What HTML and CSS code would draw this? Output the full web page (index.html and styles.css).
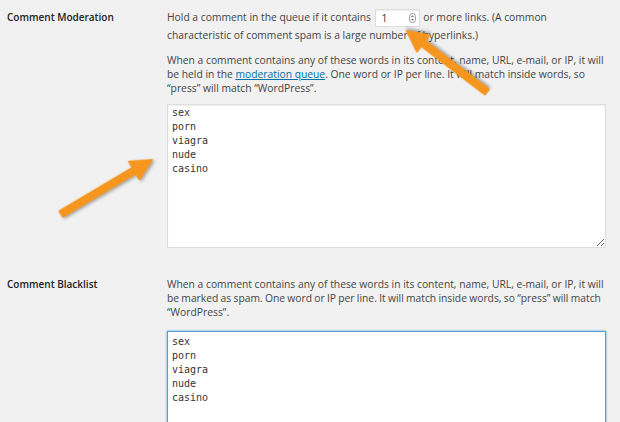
FILE: index.html
```html
<!DOCTYPE html>
<html lang="en">
<head>
  <meta charset="UTF-8">
  <title>Discussion Settings</title>
  <link rel="stylesheet" href="styles.css">
</head>
<body>

  <div class="settings">
    <div class="row row-moderation">
      <div class="row-label">Comment Moderation</div>
      <div class="row-field">
        <p class="links-line">Hold a comment in the queue if it contains <span class="num-box"><span>1</span><svg class="spinner" width="7" height="10" viewBox="0 0 7 10"><rect x="0.5" y="0.5" width="6" height="9" rx="3" fill="#fff" stroke="#999"/><path d="M3.5 2.2 L5 4 L2 4 Z M3.5 7.8 L5 6 L2 6 Z" fill="#666"/></svg></span> or more links. (A common<br>characteristic of comment spam is a large number of hyperlinks.)</p>
        <p>When a comment contains any of these words in its content, name, URL, e-mail, or IP, it will be held in the <a href="#">moderation queue</a>. One word or IP per line. It will match inside words, so &ldquo;press&rdquo; will match &ldquo;WordPress&rdquo;.</p>
        <textarea class="word-list" spellcheck="false">sex
porn
viagra
nude
casino</textarea>
      </div>
    </div>

    <div class="row row-blacklist">
      <div class="row-label">Comment Blacklist</div>
      <div class="row-field">
        <p>When a comment contains any of these words in its content, name, URL, e-mail, or IP, it will<br><span class="tight">be marked as spam. One word or IP per line. It will match inside words, so &ldquo;press&rdquo; will match</span><br>&ldquo;WordPress&rdquo;.</p>
        <textarea class="word-list focused" spellcheck="false">sex
porn
viagra
nude
casino</textarea>
      </div>
    </div>
  </div>

  <!-- callout arrows drawn over the screenshot -->
  <svg class="callouts" width="620" height="422" viewBox="0 0 620 422">
    <polygon class="arrow" transform="translate(487 92) rotate(-142.7)"
      points="0,-3.5 80,-3.5 80,-10.5 101,0 80,10.5 80,3.5 0,3.5"/>
    <polygon class="arrow" transform="translate(61 214) rotate(-30.7)"
      points="0,-3.5 85,-3.5 85,-10.5 106,0 85,10.5 85,3.5 0,3.5"/>
  </svg>

</body>
</html>
```

FILE: styles.css
```css
body {
  font-family: 'Open Sans', 'Liberation Sans', sans-serif;
  font-size: 10.3px;
  line-height: 14px;
  color: #444;
  background-color: #f1f1f1;
  margin: 0;
  padding: 0;
  position: relative;
  overflow: hidden;
  height: 422px;
}

.settings {
  padding-left: 7px;
}

.row {
  display: grid;
  grid-template-columns: 160px 439px;
}

.row-moderation {
  padding-top: 9px;
}

.row-blacklist {
  margin-top: 29px;
}

.row-label {
  font-weight: 600;
  font-size: 10px;
  color: #222;
}

.row-moderation .row-label {
  padding-top: 1px;
}

.row-field p {
  margin: 0 0 12px;
}

.row-field .links-line {
  line-height: 17px;
  margin-bottom: 9px;
}

.row-moderation p + p {
  margin-bottom: 9px;
}

.row-field a {
  color: #0073aa;
}

/* the second line of the blacklist text is set a little tighter */
.tight {
  white-space: nowrap;
  word-spacing: -0.4px;
}

.num-box {
  display: inline-flex;
  align-items: center;
  justify-content: space-between;
  box-sizing: border-box;
  width: 45px;
  height: 18px;
  padding: 0 3px 0 6px;
  margin: 0 1px 0 1px;
  vertical-align: middle;
  background-color: #fff;
  border: 1px solid #ddd;
  box-shadow: inset 0 1px 2px rgba(0, 0, 0, 0.07);
  color: #333;
}

.spinner {
  display: block;
}

.word-list {
  display: block;
  box-sizing: border-box;
  width: 439px;
  height: 144px;
  margin: 0;
  padding: 1px 4px;
  font-family: 'DejaVu Sans Mono', 'Liberation Mono', monospace;
  font-size: 10px;
  line-height: 14px;
  color: #333;
  background-color: #fff;
  border: 1px solid #ddd;
  border-radius: 0;
  box-shadow: inset 0 1px 2px rgba(0, 0, 0, 0.07);
  resize: vertical;
}

.row-blacklist .word-list {
  padding-top: 3px;
}

.word-list.focused {
  border-color: #5b9dd9;
  box-shadow: 0 0 2px rgba(30, 140, 190, 0.8);
}

.callouts {
  position: absolute;
  top: 0;
  left: 0;
  pointer-events: none;
}

.arrow {
  fill: #f7961f;
  stroke: #f7961f;
  stroke-width: 1.5;
  stroke-linejoin: round;
  filter: drop-shadow(1px 2px 1.5px rgba(0, 0, 0, 0.3));
}
```
